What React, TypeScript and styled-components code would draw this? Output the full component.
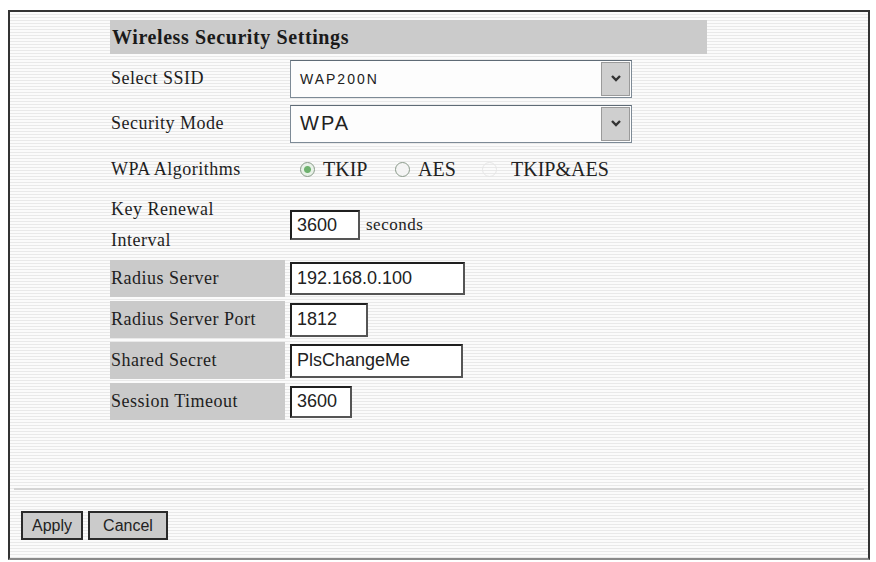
import { Fragment } from "react";
import styled, { createGlobalStyle } from "styled-components";

const GlobalStyle = createGlobalStyle`
  html, body {
    margin: 0;
    padding: 0;
    background: #ffffff;
  }
  * {
    box-sizing: border-box;
  }
`;

const Frame = styled.div`
  margin: 10px 6px 2px 8px;
  width: 862px;
  height: 550px;
  border: 2px solid #333;
  border-bottom-color: #8a8a8a;
  display: flex;
  flex-direction: column;
  background: repeating-linear-gradient(
    to bottom,
    #fbfbfb 0,
    #fbfbfb 2px,
    #e9e9e9 2px,
    #e9e9e9 3px
  );
`;

const FormArea = styled.div`
  flex: 1;
  padding: 8px 0 0 100px;
`;

const Form = styled.div`
  width: 597px;
  display: grid;
  grid-template-columns: 175px 1fr;
  column-gap: 5px;
  row-gap: 4px;
`;

const Title = styled.div`
  grid-column: 1 / -1;
  height: 34px;
  background: #cbcbcb;
  display: flex;
  align-items: center;
  padding-left: 2px;
  font-family: "Liberation Serif", serif;
  font-weight: bold;
  font-size: 20px;
  letter-spacing: 0.6px;
  color: #1a1a1a;
`;

const Label = styled.div<{ $shaded?: boolean; $h: number }>`
  height: ${(p) => p.$h}px;
  display: flex;
  align-items: center;
  padding-left: 1px;
  background: ${(p) => (p.$shaded ? "#cacaca" : "transparent")};
  font-family: "Liberation Serif", serif;
  font-size: 18px;
  letter-spacing: 0.5px;
  line-height: 31px;
  color: #1e1e1e;
  white-space: nowrap;
`;

const Cell = styled.div`
  display: flex;
  align-items: center;
  gap: 6px;
`;

const SelectBox = styled.div`
  width: 342px;
  height: 38px;
  border: 1px solid #7d8a96;
  border-top-color: #5f6b76;
  background: #fdfdfd;
  display: flex;
  align-items: stretch;
`;

const SelectValue = styled.div<{ $size: number }>`
  flex: 1;
  display: flex;
  align-items: center;
  padding-left: 9px;
  font-family: "Liberation Sans", sans-serif;
  font-size: ${(p) => p.$size}px;
  letter-spacing: 2px;
  color: #222;
`;

const ArrowButton = styled.div`
  width: 29px;
  margin: 1px;
  background: #cfcfcf;
  border: 1px solid #9a9a9a;
  display: flex;
  align-items: center;
  justify-content: center;
`;

const Radios = styled.div`
  display: flex;
  align-items: center;
  padding-left: 10px;
`;

const RadioItem = styled.div<{ $width: number; $gap?: number }>`
  width: ${(p) => p.$width}px;
  display: flex;
  align-items: center;
  gap: ${(p) => p.$gap ?? 8}px;
  font-family: "Liberation Serif", serif;
  font-size: 20px;
  color: #222;
`;

const RadioDot = styled.span<{ $checked?: boolean; $disabled?: boolean }>`
  width: 15px;
  height: 15px;
  flex: none;
  border-radius: 50%;
  border: 1px solid ${(p) => (p.$disabled ? "#e6e6e6" : "#8a9a8a")};
  background: ${(p) =>
    p.$checked
      ? "radial-gradient(circle, #6fb26f 0, #6fb26f 3px, #e8f2e8 4px)"
      : p.$disabled
      ? "transparent"
      : "#f4f4f4"};
`;

const TextBox = styled.div<{ $width: number; $height: number }>`
  width: ${(p) => p.$width}px;
  height: ${(p) => p.$height}px;
  border: 2px solid #1f1f1f;
  border-right-color: #555;
  border-bottom-color: #555;
  background: #fff;
  display: flex;
  align-items: center;
  padding-left: 5px;
  font-family: "Liberation Sans", sans-serif;
  font-size: 18px;
  color: #222;
`;

const Unit = styled.span`
  font-family: "Liberation Serif", serif;
  font-size: 17px;
  letter-spacing: 0.5px;
  color: #222;
`;

const Separator = styled.div`
  height: 2px;
  margin: 0 4px;
  background: #d4d4d4;
`;

const ButtonBar = styled.div`
  display: flex;
  gap: 5px;
  padding: 21px 0 18px 11px;
`;

const Button = styled.button<{ $width: number }>`
  width: ${(p) => p.$width}px;
  height: 29px;
  padding: 0;
  background: #cbcbcb;
  border: 2px solid #2a2a2a;
  font-family: "Liberation Sans", sans-serif;
  font-size: 16px;
  color: #222;
`;

const Chevron = () => (
  <svg width="12" height="9" viewBox="0 0 12 9">
    <path d="M2 2 L6 6 L10 2" stroke="#333" strokeWidth="2.4" fill="none" />
  </svg>
);

const fields = [
  { label: "Radius Server", value: "192.168.0.100", w: 175, h: 33 },
  { label: "Radius Server Port", value: "1812", w: 78, h: 34 },
  { label: "Shared Secret", value: "PlsChangeMe", w: 173, h: 34 },
  { label: "Session Timeout", value: "3600", w: 62, h: 32 },
];

export default function App() {
  return (
    <>
      <GlobalStyle />
      <Frame>
        <FormArea>
          <Form>
            <Title>Wireless Security Settings</Title>

            <Label $h={41}>Select SSID</Label>
            <Cell>
              <SelectBox>
                <SelectValue $size={14}>WAP200N</SelectValue>
                <ArrowButton>
                  <Chevron />
                </ArrowButton>
              </SelectBox>
            </Cell>

            <Label $h={41}>Security Mode</Label>
            <Cell>
              <SelectBox>
                <SelectValue $size={20}>WPA</SelectValue>
                <ArrowButton>
                  <Chevron />
                </ArrowButton>
              </SelectBox>
            </Cell>

            <Label $h={42}>WPA Algorithms</Label>
            <Radios>
              <RadioItem $width={95}>
                <RadioDot $checked />
                TKIP
              </RadioItem>
              <RadioItem $width={87}>
                <RadioDot />
                AES
              </RadioItem>
              <RadioItem $width={130} $gap={14}>
                <RadioDot $disabled />
                TKIP&amp;AES
              </RadioItem>
            </Radios>

            <Label $h={62}>
              Key Renewal
              <br />
              Interval
            </Label>
            <Cell>
              <TextBox $width={70} $height={30}>
                3600
              </TextBox>
              <Unit>seconds</Unit>
            </Cell>

            {fields.map((f) => (
              <Fragment key={f.label}>
                <Label $shaded $h={37}>
                  {f.label}
                </Label>
                <Cell>
                  <TextBox $width={f.w} $height={f.h}>
                    {f.value}
                  </TextBox>
                </Cell>
              </Fragment>
            ))}
          </Form>
        </FormArea>
        <Separator />
        <ButtonBar>
          <Button $width={62}>Apply</Button>
          <Button $width={80}>Cancel</Button>
        </ButtonBar>
      </Frame>
    </>
  );
}
